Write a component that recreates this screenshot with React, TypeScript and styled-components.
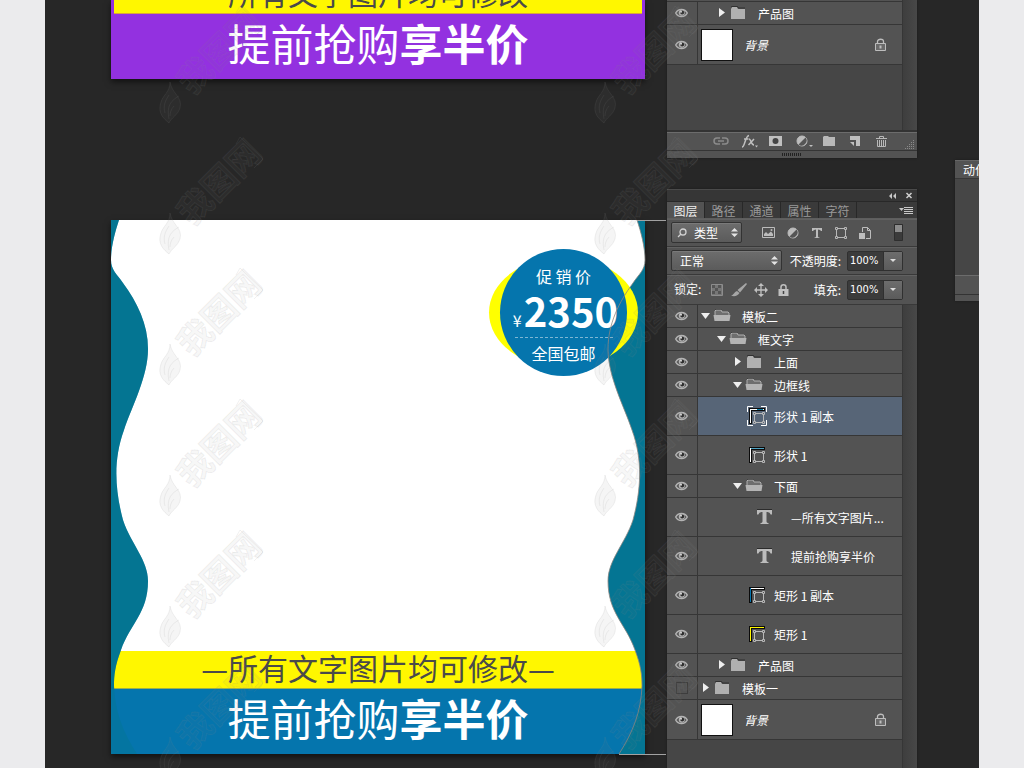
import React from 'react';
import styled, { createGlobalStyle, css } from 'styled-components';

const cjk = '"Noto Sans CJK SC", "Noto Sans", sans-serif';

const GlobalStyle = createGlobalStyle`
  * { box-sizing: border-box; }
  body { margin: 0; background: #ebebed; font-family: ${cjk}; font-size: 12px; line-height: 16px; color: #fff; }
  button, input, select { font: inherit; color: inherit; border: 0; padding: 0; margin: 0; background: none; }
  svg { display: block; }
`;

/* ---------- page ---------- */

const Workspace = styled.main`
  position: relative;
  display: flex;
  min-height: 100vh;
  margin: 0 45px;
  padding-left: 66px;
  background: #272727;
  overflow: hidden;
`;

const Artboards = styled.section`
  flex: 1;
  min-width: 0;
  display: flex;
  flex-direction: column;
  gap: 141px;
  margin-right: 22px;
  padding-bottom: 14px;
`;

const PanelDock = styled.aside`
  flex: none;
  width: 250px;
  margin-right: 38px;
  display: flex;
  flex-direction: column;
  gap: 31px;
`;

/* ---------- artboards ---------- */

const Artboard = styled.article<{ $square?: boolean; $color: string }>`
  position: relative;
  display: flex;
  flex-direction: column;
  justify-content: flex-end;
  background: ${p => (p.$square ? '#fff' : p.$color)};
  box-shadow: 0 3px 6px rgba(0, 0, 0, 0.55);
  ${p => p.$square && css`aspect-ratio: 1;`}
`;

const NoticeStrip = styled.p<{ $cropped?: boolean }>`
  display: flex;
  align-items: flex-end;
  justify-content: center;
  height: ${p => (p.$cropped ? 14 : 38)}px;
  margin: ${p => (p.$cropped ? '0 3px' : '0')};
  border-bottom: 1px solid ${p => (p.$cropped ? '#d9a43c' : '#9db04a')};
  background: #fff700;
  color: #4a4a4a;
  font-size: 30px;
  line-height: 41px;
  font-weight: 400;
  white-space: nowrap;
  overflow: hidden;
`;

const Slogan = styled.h2<{ $color: string }>`
  height: 65px;
  margin: 0;
  background: ${p => p.$color};
  color: #fff;
  font-size: 43px;
  line-height: 56px;
  font-weight: 400;
  text-align: center;
  white-space: nowrap;
  strong { font-weight: 700; }
`;

const WaveLayer = styled.svg`
  position: absolute;
  inset: 0;
  width: 100%;
  height: 100%;
  overflow: visible;
`;

const Badge = styled.div`
  position: absolute;
  top: 29px;
  right: 7px;
  width: 149px;
  height: 127px;
  display: flex;
  justify-content: center;
  &::before {
    content: '';
    position: absolute;
    inset: 8px 0;
    border-radius: 50%;
    background: #ff0;
  }
`;

const BadgeDisc = styled.div`
  position: relative;
  width: 127px;
  height: 127px;
  padding-top: 17px;
  border-radius: 50%;
  background: #0575ad;
  display: flex;
  flex-direction: column;
  align-items: center;
  font-size: 16px;
  line-height: 20px;
  font-weight: 400;
  white-space: nowrap;
`;

const Price = styled.div`
  display: flex;
  align-items: baseline;
  gap: 2px;
  height: 51px;
  padding: 2px 0 0 4px;
  b { font-size: 40px; line-height: 44px; font-weight: 700; }
`;

const BadgeRule = styled.hr`
  width: 98px;
  height: 0;
  margin: 0 0 5px;
  border: 0;
  border-top: 1px dashed #7db6d3;
`;

const leftWave =
  'M0 0H8C4 12 0 27 0 40C0 50 6 54 12 63C26 82 37 104 37 129C37 157 21 186 13 210C2 240 4 270 12 300C20 324 37 340 37 361C37 393 19 404 10 430C4 446 3 455 3 466C4 492 12 512 26 534H0Z';
const rightCurve =
  'M526 0C530 12 534 27 534 40C534 50 528 54 522 63C508 82 497 104 497 129C497 157 513 186 521 210C532 240 530 270 522 300C514 324 497 340 497 361C497 393 515 404 524 430C530 446 531 455 531 466C530 492 522 512 508 534';

/* ---------- panels ---------- */

const Panel = styled.section<{ $grow?: boolean }>`
  display: flex;
  flex-direction: column;
  ${p => p.$grow && css`flex: 1;`}
  background: #535353;
  box-shadow: 0 0 2px #1a1a1a;
`;

const TitleBar = styled.header`
  display: flex;
  align-items: center;
  justify-content: flex-end;
  gap: 8px;
  height: 13px;
  padding-right: 4px;
  background: #363636;
  border-top: 1px solid #4a4a4a;
  border-bottom: 1px solid #282828;
`;

const IconButton = styled.button`
  display: flex;
  flex: none;
  align-items: center;
  justify-content: center;
`;

const TabBar = styled.div`
  display: flex;
  height: 17px;
  background: #3a3a3a;
  border-bottom: 1px solid #5e5e5e;
  & > :last-child { margin-left: auto; margin-right: 4px; }
`;

const Tab = styled.button<{ $active?: boolean }>`
  width: 38px;
  border-right: 1px solid #282828;
  background: ${p => (p.$active ? '#535353' : 'transparent')};
  color: ${p => (p.$active ? '#f0f0f0' : '#999')};
  line-height: 18px;
`;

const ControlRow = styled.div<{ $tall?: boolean }>`
  display: flex;
  align-items: center;
  height: ${p => (p.$tall ? 30 : 28)}px;
  padding: 0 14px 0 4px;
  border-bottom: 1px solid #393939;
  box-shadow: inset 0 1px #616161;
`;

const SelectBox = styled.span<{ $width: number; $indent: number }>`
  position: relative;
  display: block;
  flex: none;
  width: ${p => p.$width}px;
  select {
    appearance: none;
    display: block;
    width: 100%;
    height: 21px;
    padding-left: ${p => p.$indent}px;
    border: 1px solid #333;
    border-radius: 2px;
    background: linear-gradient(#6d6d6d, #5b5b5b);
    box-shadow: inset 0 1px #7a7a7a;
  }
  svg { position: absolute; top: 6px; pointer-events: none; }
  .spin { right: 4px; }
  .lens { left: 6px; }
`;

const FilterIcons = styled.div`
  display: flex;
  flex: 1;
  align-items: center;
  gap: 8px;
  margin-left: 19px;
  & > :last-child { margin-left: auto; }
`;

const LockIcons = styled.div`
  display: flex;
  align-items: center;
  gap: 6px;
  margin-left: 8px;
`;

const LockLabel = styled.span`
  padding-left: 3px;
  padding-bottom: 2px;
`;

const Field = styled.label`
  display: flex;
  align-items: center;
  gap: 6px;
  margin-left: auto;
`;

const Stepper = styled.span`
  display: flex;
  height: 20px;
  border: 1px solid #303030;
  border-radius: 2px;
  background: #3b3b3b;
  input {
    width: 35px;
    padding-left: 2px;
    font-family: "DejaVu Sans Condensed", "DejaVu Sans", sans-serif;
    font-size: 11px;
  }
  button {
    width: 19px;
    border-left: 1px solid #303030;
    background: linear-gradient(#6d6d6d, #5b5b5b);
    display: flex;
    align-items: center;
    justify-content: center;
  }
`;

const ListArea = styled.div`
  display: flex;
  flex: 1;
  background: #464646;
`;

const LayerList = styled.ul`
  flex: 1;
  min-width: 0;
  margin: 0;
  padding: 0;
  list-style: none;
`;

const Gutter = styled.div`
  width: 15px;
  border-left: 1px solid #363636;
  background: linear-gradient(90deg, #3e3e3e, #484848);
`;

const RowBox = styled.li<{ $height: number; $selected?: boolean }>`
  display: flex;
  height: ${p => p.$height}px;
  border-bottom: 1px solid #363636;
  background: #535353;
  & > div { background: ${p => (p.$selected ? '#576577' : 'transparent')}; }
`;

const EyeCell = styled.button`
  flex: none;
  width: 31px;
  border-right: 1px solid #363636;
  display: flex;
  align-items: center;
  justify-content: center;
`;

const EmptyEye = styled.span`
  width: 12px;
  height: 12px;
  border: 1px solid #3d3d3d;
`;

const NameCell = styled.div<{ $indent: number }>`
  flex: 1;
  min-width: 0;
  display: flex;
  align-items: center;
  padding-left: ${p => p.$indent}px;
  padding-right: 16px;
  white-space: nowrap;
`;

const Twisty = styled.button`
  width: 10px;
  margin-right: 2px;
`;

const LayerName = styled.span<{ $gap: number; $italic?: boolean }>`
  flex: 1;
  padding-top: ${p => (p.$italic ? 0 : 2)}px;
  margin-left: ${p => p.$gap}px;
  font-style: ${p => (p.$italic ? 'italic' : 'normal')};
`;

const Thumb = styled.span`
  width: 32px;
  height: 32px;
  border: 1px solid #111;
  background: #fff;
`;

const ListEdge = styled.li`
  height: 2px;
  border-bottom: 1px solid #363636;
  background: #535353;
`;

const Filler = styled.li`
  height: 65px;
`;

const PanelFooter = styled.footer`
  display: flex;
  align-items: center;
  gap: 10px;
  height: 21px;
  padding-left: 45px;
  border-top: 2px solid #333;
  border-bottom: 1px solid #353535;
  box-shadow: inset 0 1px #6c6c6c;
  & > :last-child { margin-left: auto; margin-right: 2px; align-self: flex-end; }
`;

const Grip = styled.div`
  display: flex;
  justify-content: center;
  align-items: center;
  height: 7px;
`;

const ActionsPanel = styled.section`
  flex: none;
  align-self: flex-start;
  width: 24px;
  margin-top: 160px;
  overflow: hidden;
  white-space: nowrap;
  background: #535353;
  box-shadow: 0 0 2px #1a1a1a;
  h3 { margin: 0; height: 19px; padding-left: 8px; font-size: 12px; line-height: 17px; font-weight: 400; border-top: 1px solid #666; border-bottom: 1px solid #383838; }
`;

const ActionsBody = styled.div`
  height: 96px;
  background: #464646;
`;

const ActionsFoot = styled.div`
  height: 26px;
  border-top: 1px solid #6c6c6c;
  &::after { content: ''; display: block; height: 18px; border-bottom: 1px solid #333; }
`;

/* ---------- watermark ---------- */

const WatermarkLayer = styled.div`
  position: absolute;
  inset: 0 auto auto 111px;
  display: flex;
  gap: 323px;
  height: 100%;
  padding-top: 6px;
  overflow: hidden;
  pointer-events: none;
`;

const WatermarkColumn = styled.div`
  display: flex;
  flex-direction: column;
  gap: 13px;
  svg { flex: none; }
`;

const Watermark = () => (
  <svg width="112" height="118" viewBox="0 0 112 118" fill="rgba(128,128,128,.08)" stroke="rgba(140,140,140,.12)" strokeWidth="1">
    <path d="M14 76C16 88 27 91 24 102C22 109 15 112 13 117C8 113 1 107 5 96C7 89 14 86 14 76Z" />
    <path d="M23 90C16 94 10 99 13 113M13 89C9 95 7 100 9 107M18 100C15 103 14 107 14 110" fill="none" />
    <path d="M80 7L84 0L107 22L98 31" fill="none" />
    <text x="36" y="90" transform="rotate(-45 36 90)" fontSize="34" fontWeight="700" fontFamily='"Noto Sans CJK SC", sans-serif'>我图网</text>
  </svg>
);

/* ---------- icons ---------- */

const Eye = () => (
  <svg width="14" height="10" viewBox="0 0 14 10" fill="none">
    <path d="M.7 5C3 .3 10 .3 12.300 5C10 9.700 3 9.700 .7 5Z" fill="#5c5c5c" stroke="#b4b4b4" strokeWidth="1.400" />
    <circle cx="6.800" cy="4.800" r="3" fill="#b4b4b4" />
    <circle cx="7.200" cy="4.500" r="2" fill="#2d2d2d" />
    <circle cx="6" cy="3.700" r="1" fill="#ddd" />
  </svg>
);

const Arrow = ({ open }: { open?: boolean }) => (
  <svg width="10" height="10" viewBox="0 0 10 10" fill="#efefef">
    <path d={open ? 'M0 2H9L4.500 8Z' : 'M2 0V9L8 4.500Z'} />
  </svg>
);

const Folder = ({ open }: { open?: boolean }) => (
  <svg width="18" height="14" viewBox="0 0 18 14">
    {open ? (
      <>
        <path d="M2 7V2L3 1H8L9 3H15L16 4V7" fill="#6e6e6e" stroke="#b0b0b0" />
        <path d="M.5 6H17.500L16.500 12H1.500Z" fill="#b4b4b4" />
        <path d="M2 0H8.500" stroke="#2e2e2e" />
      </>
    ) : (
      <>
        <path d="M2 3L3 1H8L9 3H16V13H2Z" fill="#b0b0b0" />
        <path d="M2 1L3 .5H8.500L9.500 2H16" fill="none" stroke="#303030" />
      </>
    )}
  </svg>
);

const TypeGlyph = () => (
  <svg width="20" height="16" viewBox="0 0 20 16">
    <path d="M2 .5H17" stroke="#2c2c2c" />
    <path d="M2 1H17V5.500H15.600Q15 3 12.500 3H11.500V12.500Q11.500 14 13.500 14V15H5.500V14Q7.500 14 7.500 12.500V3H6.500Q4 3 3.400 5.500H2Z" fill="#bcbcbc" />
  </svg>
);

const Nodes = ({ color = '#b8b8b8' }: { color?: string }) => (
  <g fill="none" stroke={color}>
    <path d="M3 1.500H9M3 10.500H9M1.500 3V9M10.500 3V9" />
    <path d="M.5 .5H2.500V2.500H.5ZM9.500 .5H11.500V2.500H9.500ZM.5 9.500H2.500V11.500H.5ZM9.500 9.500H11.500V11.500H9.500Z" />
  </g>
);

const ShapeThumb = ({ top, side, selected }: { top: string; side: string; selected?: boolean }) => (
  <svg width="20" height="20" viewBox="0 0 20 20">
    {selected && <path d="M.5 6V.5H6M14 .5H19.500V6M19.500 14V19.500H14M6 19.500H.5V14" fill="none" stroke="#fff" />}
    <path d="M2 2H18V5H5V18H2Z" fill="#0b0b0b" />
    <path d="M3 3.500H17" stroke={top} />
    <path d="M3.500 3V17" stroke={side} />
    {selected && <path d="M10 3.500H16" stroke="#0a7ba5" />}
    <g transform="translate(6 6)"><Nodes /></g>
  </svg>
);

const Padlock = () => (
  <svg width="11" height="14" viewBox="0 0 11 14" fill="none" stroke="#bdbdbd">
    <path d="M2.500 5V3.500C2.500 .5 8.500 .5 8.500 3.500V5" strokeWidth="1.300" />
    <path d="M.5 5.500H10.500V12.500H.5Z" fill="#6a6a6a" />
    <path d="M5.500 7.500V10.500" strokeWidth="2" />
  </svg>
);

const SpinArrows = () => (
  <svg className="spin" width="7" height="9" viewBox="0 0 7 9" fill="#e4e4e4"><path d="M0 3.500H7L3.500 0ZM0 5.500H7L3.500 9Z" /></svg>
);

const HalfDisc = () => (
  <svg width="12" height="12" viewBox="0 0 12 12"><circle cx="6" cy="6" r="5" fill="#bcbcbc" stroke="#bcbcbc" /><path d="M9.500 2.500A5 5 0 0 1 2.500 9.500Z" fill="#555" /></svg>
);

const DropCaret = () => (
  <svg width="6" height="3" viewBox="0 0 6 3" fill="#dedede"><path d="M0 0H6L3 3Z" /></svg>
);

/* ---------- layers ---------- */

type Layer = {
  kind: 'group' | 'shape' | 'type' | 'background';
  name: string;
  level?: number;
  open?: boolean;
  hidden?: boolean;
  selected?: boolean;
  top?: string;
  side?: string;
};

const layers: Layer[] = [
  { kind: 'group', name: '模板二', level: 0, open: true },
  { kind: 'group', name: '框文字', level: 1, open: true },
  { kind: 'group', name: '上面', level: 2 },
  { kind: 'group', name: '边框线', level: 2, open: true },
  { kind: 'shape', name: '形状 1 副本', selected: true, top: '#fff', side: '#fff' },
  { kind: 'shape', name: '形状 1', top: '#4fa3c2', side: '#fff' },
  { kind: 'group', name: '下面', level: 2, open: true },
  { kind: 'type', name: '—所有文字图片...' },
  { kind: 'type', name: '提前抢购享半价' },
  { kind: 'shape', name: '矩形 1 副本', top: '#fff', side: '#0575ad' },
  { kind: 'shape', name: '矩形 1', top: '#fff700', side: '#fff700' },
  { kind: 'group', name: '产品图', level: 1 },
  { kind: 'group', name: '模板一', level: 0, hidden: true },
  { kind: 'background', name: '背景' },
];

const rowHeight = { group: 23, shape: 39, type: 39, background: 40 };
const baseIndent = { group: 3, shape: 49, type: 57, background: 3 };
const nameGap = { group: 11, shape: 7, type: 16, background: 11 };

const LayerRow = ({ layer }: { layer: Layer }) => (
  <RowBox $height={rowHeight[layer.kind]} $selected={layer.selected}>
    <EyeCell aria-label={`显示 ${layer.name}`}>{layer.hidden ? <EmptyEye /> : <Eye />}</EyeCell>
    <NameCell $indent={baseIndent[layer.kind] + 16 * (layer.level ?? 0)}>
      {layer.kind === 'group' && (
        <>
          <Twisty aria-label={`展开 ${layer.name}`}><Arrow open={layer.open} /></Twisty>
          <Folder open={layer.open} />
        </>
      )}
      {layer.kind === 'shape' && <ShapeThumb top={layer.top!} side={layer.side!} selected={layer.selected} />}
      {layer.kind === 'type' && <TypeGlyph />}
      {layer.kind === 'background' && <Thumb />}
      <LayerName $gap={nameGap[layer.kind]} $italic={layer.kind === 'background'}>{layer.name}</LayerName>
      {layer.kind === 'background' && <Padlock />}
    </NameCell>
  </RowBox>
);

const PercentField = ({ label, id }: { label: string; id: string }) => (
  <Field htmlFor={id}>
    {label}
    <Stepper>
      <input id={id} defaultValue="100%" />
      <button aria-label={`${label}选项`}><DropCaret /></button>
    </Stepper>
  </Field>
);

const Slogans = ({ color }: { color: string }) => (
  <Slogan $color={color}>提前抢购<strong>享半价</strong></Slogan>
);

const Notice = ({ cropped }: { cropped?: boolean }) => (
  <NoticeStrip $cropped={cropped}>—所有文字图片均可修改—</NoticeStrip>
);

const marks = [0, 1, 2, 3, 4, 5];

export default function App() {
  return (
    <>
      <GlobalStyle />
      <Workspace>
        <Artboards>
          <Artboard $color="#9331e0">
            <Notice cropped />
            <Slogans color="#9331e0" />
          </Artboard>
          <Artboard $square $color="#0575ad">
            <Notice />
            <Slogans color="#0575ad" />
            <WaveLayer viewBox="0 0 534 534" preserveAspectRatio="none">
              <defs>
                <clipPath id="above"><path d="M0 0H534V469H0Z" /></clipPath>
              </defs>
              <path d={leftWave} fill="#047593" clipPath="url(#above)" />
              <path d={leftWave} fill="#047593" opacity=".45" />
              <path d={`${rightCurve}H534V0Z`} fill="#047593" />
            </WaveLayer>
            <Badge>
              <BadgeDisc>
                <span>促 销 价</span>
                <Price>¥<b>2350</b></Price>
                <BadgeRule />
                <span>全国包邮</span>
              </BadgeDisc>
            </Badge>
            <WaveLayer viewBox="0 0 534 534" preserveAspectRatio="none">
              <path d={rightCurve} fill="none" stroke="#8d8580" strokeWidth=".8" />
              <path d="M526 .5H555M508 534.500H555" stroke="#a2a2a2" />
            </WaveLayer>
          </Artboard>
        </Artboards>

        <PanelDock>
          <Panel>
            <ListArea>
              <LayerList>
                <ListEdge />
                <LayerRow layer={{ kind: 'group', name: '产品图', level: 1 }} />
                <LayerRow layer={{ kind: 'background', name: '背景' }} />
                <Filler />
              </LayerList>
              <Gutter />
            </ListArea>
            <PanelFooter>
              <IconButton aria-label="链接图层">
                <svg width="18" height="12" viewBox="0 0 18 12" fill="none" stroke="#8b8b8b" strokeWidth="1.500"><path d="M8 3H5C1 3 1 9 5 9H8M10 3H13C17 3 17 9 13 9H10M6 6H12" /></svg>
              </IconButton>
              <IconButton aria-label="图层样式">
                <svg width="18" height="14" viewBox="0 0 18 14" fill="none" stroke="#c0c0c0" strokeWidth="1.500"><path d="M2 13C5 13 5 2 9 1.500M4 5H8.500M9 5C11 5 11 11 14 11M14 5L8.500 11" /><path d="M15 11.500H18L16.500 13.500Z" fill="#c0c0c0" stroke="none" /></svg>
              </IconButton>
              <IconButton aria-label="添加蒙版">
                <svg width="16" height="12" viewBox="0 0 16 12"><path d="M1 1H14V11H1Z" fill="#c0c0c0" /><circle cx="7.500" cy="6" r="3" fill="#444" /></svg>
              </IconButton>
              <IconButton aria-label="调整图层">
                <svg width="2" height="2" /><HalfDisc />
                <svg width="5" height="12" viewBox="0 0 5 12"><path d="M1 10H5L3 12Z" fill="#c0c0c0" /></svg>
              </IconButton>
              <IconButton aria-label="新建组">
                <svg width="14" height="12" viewBox="0 0 14 12"><path d="M0 2L1 1H5L6 2H12V11H0Z" fill="#b8b8b8" /></svg>
              </IconButton>
              <IconButton aria-label="新建图层">
                <svg width="16" height="12" viewBox="0 0 16 12"><path d="M3 1H13V11H9V5H3Z" fill="#c0c0c0" /><path d="M3 7H7V11Z" fill="#c0c0c0" /></svg>
              </IconButton>
              <IconButton aria-label="删除图层">
                <svg width="16" height="13" viewBox="0 0 16 13" fill="none" stroke="#b8b8b8"><path d="M3 3.500H14M6.500 3V1.500H10.500V3M4.500 5V11.500H12.500V5M6.500 5V11M8.500 5V11M10.500 5V11" /></svg>
              </IconButton>
              <svg width="10" height="12" viewBox="0 0 10 12" stroke="#8a8a8a" strokeDasharray="1 1"><path d="M8 2.500H10M6 4.500H10M4 6.500H10M2 8.500H10M0 10.500H10" /></svg>
            </PanelFooter>
            <Grip>
              <svg width="20" height="3" viewBox="0 0 20 3"><path d="M0 1.500H20" stroke="#222" strokeWidth="3" strokeDasharray="1 1" /></svg>
            </Grip>
          </Panel>

          <Panel $grow>
            <TitleBar>
              <IconButton aria-label="折叠">
                <svg width="9" height="6" viewBox="0 0 9 6" fill="#c8c8c8"><path d="M4 0V6L1 3ZM8 0V6L5 3Z" /></svg>
              </IconButton>
              <IconButton aria-label="关闭">
                <svg width="8" height="7" viewBox="0 0 8 7" stroke="#d0d0d0" strokeWidth="1.500"><path d="M1.500 1L6.500 6M6.500 1L1.500 6" /></svg>
              </IconButton>
            </TitleBar>
            <TabBar>
              <Tab $active>图层</Tab>
              <Tab>路径</Tab>
              <Tab>通道</Tab>
              <Tab>属性</Tab>
              <Tab>字符</Tab>
              <IconButton aria-label="面板菜单">
                <svg width="14" height="9" viewBox="0 0 14 9"><path d="M0 2H5L2.500 5Z" fill="#c8c8c8" /><path d="M5 1.500H14M5 3.500H14M5 5.500H14M5 7.500H14" stroke="#c8c8c8" /></svg>
              </IconButton>
            </TabBar>
            <ControlRow>
              <SelectBox $width={71} $indent={22}>
                <select aria-label="筛选类型"><option>类型</option></select>
                <svg className="lens" width="10" height="10" viewBox="0 0 10 10" fill="none" stroke="#d2d2d2" strokeWidth="1.300"><circle cx="6" cy="4" r="3" /><path d="M4 6L1 9" /></svg>
                <SpinArrows />
              </SelectBox>
              <FilterIcons>
                <IconButton aria-label="像素图层">
                  <svg width="16" height="13" viewBox="0 0 16 13"><path d="M1.500 1.500H13.500V11.500H1.500Z" fill="none" stroke="#bcbcbc" /><path d="M3 10V8L5 6L7 8L10 5.500L12 8V10Z" fill="#bcbcbc" /><circle cx="10.500" cy="4" r="1" fill="#bcbcbc" /></svg>
                </IconButton>
                <IconButton aria-label="调整图层筛选"><svg width="2" height="2" /><HalfDisc /><svg width="2" height="2" /></IconButton>
                <IconButton aria-label="文字图层">
                  <svg width="16" height="12" viewBox="0 0 16 12"><path d="M3 1H13V4H12Q11.500 2.500 9 2.500V9.500Q9 10.500 10.500 10.500V11H5.500V10.500Q7 10.500 7 9.500V2.500Q4.500 2.500 4 4H3Z" fill="#bcbcbc" /></svg>
                </IconButton>
                <IconButton aria-label="形状图层">
                  <svg width="16" height="12" viewBox="-2 0 16 12"><Nodes /></svg>
                </IconButton>
                <IconButton aria-label="智能对象">
                  <svg width="16" height="14" viewBox="0 0 16 14" fill="none" stroke="#bcbcbc"><path d="M5.500 6V1.500H10.500L13.500 4.500V12.500H9" /><path d="M10.500 1.500V4.500H13.500" /><path d="M2 7H8V13H2Z" fill="#bcbcbc" stroke="none" /></svg>
                </IconButton>
                <IconButton aria-label="筛选开关">
                  <svg width="9" height="17" viewBox="0 0 9 17"><path d="M.5 .5H8.500V16.500H.5Z" fill="#3b3b3b" stroke="#2e2e2e" /><path d="M1 1H8V8H1Z" fill="#8c8c8c" /></svg>
                </IconButton>
              </FilterIcons>
            </ControlRow>
            <ControlRow>
              <SelectBox $width={111} $indent={8}>
                <select aria-label="混合模式"><option>正常</option></select>
                <SpinArrows />
              </SelectBox>
              <PercentField id="opacity" label="不透明度:" />
            </ControlRow>
            <ControlRow $tall>
              <LockLabel>锁定:</LockLabel>
              <LockIcons>
                <IconButton aria-label="锁定透明像素">
                  <svg width="16" height="12" viewBox="0 0 16 12"><path d="M2.500 .5H13.500V11.500H2.500Z" fill="#777" stroke="#8d8d8d" /><path d="M3 1H6V4H3ZM9 1H12V4H9ZM6 4H9V7H6ZM3 7H6V10H3ZM9 7H12V10H9Z" fill="#555" /></svg>
                </IconButton>
                <IconButton aria-label="锁定图像像素">
                  <svg width="16" height="14" viewBox="0 0 16 14" fill="#a6a6a6"><path d="M15 0L16 1L9 9.500L6.500 7ZM6 8L8.500 10C7 13 3 14 0 12.500C3 12 3 9 6 8Z" /></svg>
                </IconButton>
                <IconButton aria-label="锁定位置">
                  <svg width="16" height="14" viewBox="0 0 16 14"><path d="M8 2V12M3 7H13" stroke="#c0c0c0" strokeWidth="1.300" /><path d="M8 0L11 3H5ZM8 14L11 11H5ZM1 7L4 4V10ZM15 7L12 4V10Z" fill="#c0c0c0" /></svg>
                </IconButton>
                <IconButton aria-label="锁定全部">
                  <svg width="16" height="14" viewBox="0 0 16 14"><path d="M6 6V4C6 1 11 1 11 4V6" fill="none" stroke="#c0c0c0" strokeWidth="1.500" /><path d="M3.500 6H13.500V13H3.500Z" fill="#c0c0c0" /><path d="M8.500 8V11" stroke="#444" strokeWidth="1.500" /></svg>
                </IconButton>
              </LockIcons>
              <PercentField id="fill" label="填充:" />
            </ControlRow>
            <ListArea>
              <LayerList>
                {layers.map((layer, i) => <LayerRow key={i} layer={layer} />)}
              </LayerList>
              <Gutter />
            </ListArea>
          </Panel>
        </PanelDock>

        <ActionsPanel>
          <h3>动作</h3>
          <ActionsBody />
          <ActionsFoot />
        </ActionsPanel>

        <WatermarkLayer aria-hidden="true">
          <WatermarkColumn>{marks.map(m => <Watermark key={m} />)}</WatermarkColumn>
          <WatermarkColumn>{marks.map(m => <Watermark key={m} />)}</WatermarkColumn>
        </WatermarkLayer>
      </Workspace>
    </>
  );
}
